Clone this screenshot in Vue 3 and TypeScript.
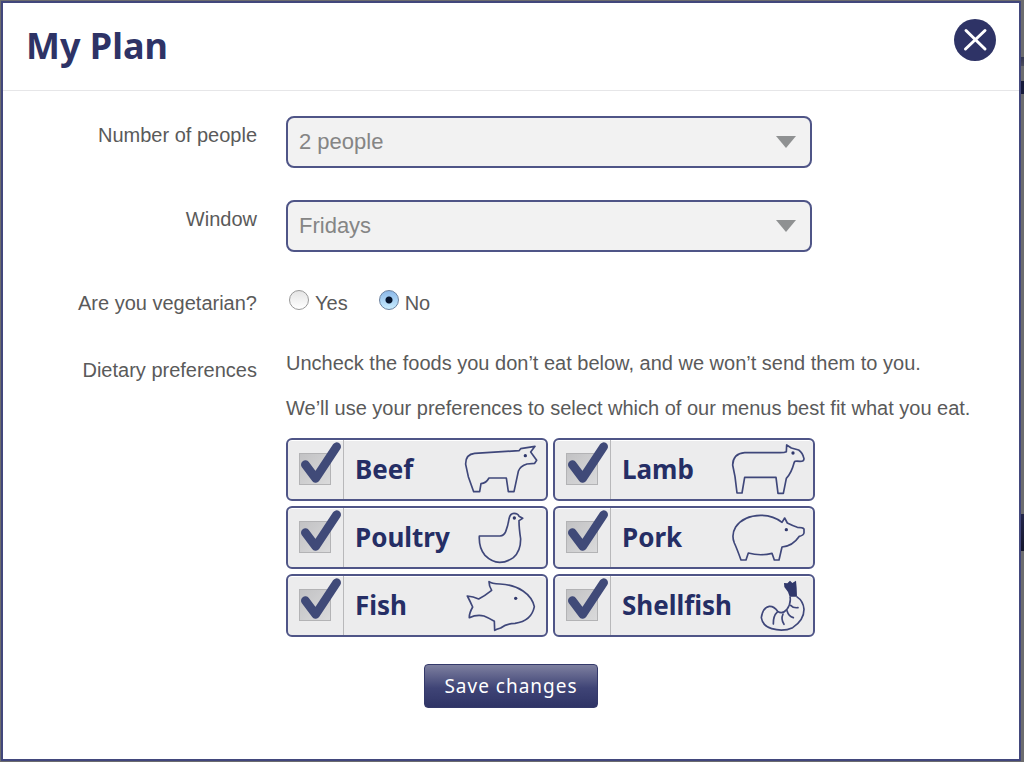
<script setup lang="ts">
import { ref } from 'vue'

interface Food {
  id: string
  name: string
  viewBox: string
  outline: string
  eye?: [number, number]
  detail?: string
  solid?: string
}

const people = ref('2 people')
const deliveryWindow = ref('Fridays')
const vegetarian = ref('no')
const selected = ref<string[]>(['beef', 'lamb', 'poultry', 'pork', 'fish', 'shellfish'])

const foods: Food[] = [
  {
    id: 'beef',
    name: 'Beef',
    viewBox: '540 30 240 177',
    outline:
      'M581 185H599L603 161Q618 160 627 144H679L685 185H702L715 124Q720 108 741 102L764 100L770 91L758 74L752 66L765 49L722 56L717 62L584 70Q556 73 557 103L565 140Z',
    eye: [736, 77],
  },
  {
    id: 'lamb',
    name: 'Lamb',
    viewBox: '531 30 240 177',
    outline:
      'M561 189H576L584 142H678L684 190H700L709 145Q724 130 733 96Q734 92 750 94Q762 94 762 86Q758 68 746 60L724 54L710 45L709 65Q704 68 690 68H584Q549 71 548 105L555 140Z',
    eye: [729, 69],
  },
  {
    id: 'poultry',
    name: 'Poultry',
    viewBox: '540 15 240 177',
    outline:
      'M598 99H660Q672 98 677 86Q684 68 687 48Q690 31 702 31Q714 31 717 40L728 46L717 53Q717 75 722 108Q722 145 700 164Q680 178 659 178Q635 177 615 157Q596 135 598 99Z',
    eye: [703, 45],
  },
  {
    id: 'pork',
    name: 'Pork',
    viewBox: '531 15 240 177',
    outline:
      'M573 171H588L595 150Q630 160 666 151L673 171H687L696 132Q728 130 748 100Q761 97 762 90V78Q758 73 742 73Q728 68 712 60L704 45L696 58Q670 37 632 37Q580 38 557 72Q543 95 553 120Q560 135 573 171Z',
    eye: [709, 80],
  },
  {
    id: 'fish',
    name: 'Fish',
    viewBox: '540 15 240 177',
    outline:
      'M627 32Q634 38 660 39C715 41 755 70 763 107C757 138 735 153 705 157Q680 158 662 171Q648 175 644 178L643 151Q625 140 612 135Q590 130 568 140Q567 128 578 108Q570 90 562 75Q580 77 596 84Q615 74 635 58Q627 45 627 32Z',
    eye: [707, 82],
  },
  {
    id: 'shellfish',
    name: 'Shellfish',
    viewBox: '531 15 240 177',
    outline:
      'M720 77Q724 98 710 116Q697 131 683 121Q672 105 658 106Q638 110 634 140Q638 165 665 173Q700 183 728 170Q762 148 762 115Q760 90 740 77',
    detail: 'M683 122Q669 135 670 159M699 129Q692 145 702 160M711 119Q716 136 730 140M722 103Q730 112 744 110',
    solid: 'M702 36L712 37L720 29L727 36L738 29L740 50L741 77H719Q716 62 703 48Z',
  },
]
</script>

<template>
  <div class="backdrop">
    <section class="modal" role="dialog" aria-labelledby="plan-title">
      <header class="head">
        <h1 id="plan-title">My Plan</h1>
        <button class="close" type="button" aria-label="Close">
          <svg viewBox="0 0 42 42" aria-hidden="true">
            <path d="M12 11.500L31 30M31 11.500L11.500 30" />
          </svg>
        </button>
      </header>

      <form class="form" @submit.prevent>
        <div class="row">
          <label class="caption" for="people">Number of people</label>
          <div class="select">
            <select id="people" v-model="people">
              <option>2 people</option>
            </select>
            <svg viewBox="0 0 20 12" aria-hidden="true"><path d="M0 0H20L10 12Z" /></svg>
          </div>
        </div>

        <div class="row">
          <label class="caption" for="window">Window</label>
          <div class="select">
            <select id="window" v-model="deliveryWindow">
              <option>Fridays</option>
            </select>
            <svg viewBox="0 0 20 12" aria-hidden="true"><path d="M0 0H20L10 12Z" /></svg>
          </div>
        </div>

        <div class="row" role="radiogroup" aria-labelledby="veg-label">
          <span id="veg-label" class="caption">Are you vegetarian?</span>
          <div class="radios">
            <label><input v-model="vegetarian" type="radio" name="vegetarian" value="yes" />Yes</label>
            <label><input v-model="vegetarian" type="radio" name="vegetarian" value="no" />No</label>
          </div>
        </div>

        <div class="row diet" role="group" aria-labelledby="diet-label">
          <span id="diet-label" class="caption">Dietary preferences</span>
          <div class="diet-body">
            <p>Uncheck the foods you don’t eat below, and we won’t send them to you.</p>
            <p>We’ll use your preferences to select which of our menus best fit what you eat.</p>
            <div class="foods">
              <label v-for="food in foods" :key="food.id" class="food">
                <span class="check">
                  <input v-model="selected" type="checkbox" :value="food.id" />
                  <svg class="tick" viewBox="24 30 168 177" aria-hidden="true">
                    <path d="M76 104L107 145L170 50" />
                  </svg>
                </span>
                <span class="name">{{ food.name }}</span>
                <svg class="animal" :viewBox="food.viewBox" aria-hidden="true">
                  <path :d="food.outline" />
                  <path v-if="food.detail" class="detail" :d="food.detail" />
                  <path v-if="food.solid" class="solid" :d="food.solid" />
                  <circle v-if="food.eye" class="solid" :cx="food.eye[0]" :cy="food.eye[1]" r="5" />
                </svg>
              </label>
            </div>
          </div>
        </div>

        <button class="save" type="submit">Save changes</button>
      </form>
    </section>
  </div>
</template>

<style>
body {
  margin: 0;
}
</style>

<style scoped>
* {
  box-sizing: border-box;
}

.backdrop {
  display: flex;
  min-height: 100vh;
  padding: 1px 3px 1px 1px;
  background:
    linear-gradient(#34364e, #4b4c5c) right 57px / 3px 9px no-repeat,
    linear-gradient(#161a3a, #161a3a) right 81px / 3px 13px no-repeat,
    linear-gradient(#24264a, #14152a) right 514px / 3px 37px no-repeat,
    #6c6c6e;
  color: #5a5a5a;
  font: 20px/28px "Liberation Sans", Arial, sans-serif;
}

.modal {
  flex: 1;
  min-width: 0;
  border: 2px solid #42477c;
  background: #fff;
}

.head {
  display: flex;
  align-items: flex-start;
  justify-content: space-between;
  height: 88px;
  padding: 16px 23px 0 23px;
  border-bottom: 1px solid #e6e6e8;
}

h1 {
  margin: 0;
  color: #2e3366;
  font: 700 36px/54px "Noto Sans", sans-serif;
}

.close {
  width: 42px;
  height: 42px;
  padding: 0;
  border: 0;
  border-radius: 50%;
  background: #2e3366;
}

.close svg {
  display: block;
}

.close path {
  fill: none;
  stroke: #fff;
  stroke-width: 3;
  stroke-linecap: round;
}

.form {
  display: flex;
  flex-direction: column;
  padding: 25px 3px 50px;
}

.row {
  display: grid;
  grid-template-columns: 251px minmax(0, 1fr);
  column-gap: 29px;
  margin-bottom: 32px;
}

.caption {
  padding-top: 5px;
  text-align: right;
}

.select {
  position: relative;
  max-width: 526px;
}

.select select {
  display: block;
  width: 100%;
  height: 52px;
  padding: 0 44px 0 11px;
  border: 2px solid #4f5587;
  border-radius: 8px;
  appearance: none;
  background: #f2f2f2;
  color: #858585;
  font: 22px/28px "Liberation Sans", Arial, sans-serif;
}

.select svg {
  position: absolute;
  top: 20px;
  right: 16px;
  width: 20px;
  height: 12px;
  fill: #8f9192;
  pointer-events: none;
}

.radios {
  display: flex;
  gap: 31px;
  padding: 5px 0 0 3px;
}

.radios label {
  display: flex;
  gap: 6px;
}

.radios input {
  width: 20px;
  height: 20px;
  margin: 1px 0 0;
  border: 1px solid #999;
  border-radius: 50%;
  appearance: none;
  background: linear-gradient(#e4e4e4, #fff);
}

.radios input:checked {
  border-color: #6c82a0;
  background:
    radial-gradient(circle, #06142c 3px, transparent 4px),
    linear-gradient(#8bb8e8, #c8ecff);
}

.diet {
  margin-bottom: 27px;
}

.diet .caption {
  padding-top: 7px;
}

.diet-body p {
  margin: 0 0 17px;
}

.diet-body p:last-of-type {
  margin-bottom: 16px;
}

.foods {
  display: grid;
  grid-template-columns: repeat(2, 262px);
  gap: 5px;
}

.food {
  display: flex;
  height: 63px;
  border: 2px solid #4f5587;
  border-radius: 6px;
  background: #ececed;
  box-shadow: inset 0 1px #fff;
}

.check {
  position: relative;
  flex: 0 0 56px;
  padding: 13px 0 0 11px;
  border-right: 1px solid #b8b8ba;
}

.check input {
  display: block;
  width: 32px;
  height: 32px;
  margin: 0;
  border: 1px solid #b3b3b5;
  appearance: none;
  background: linear-gradient(135deg, #c2c2c4, #dadadb);
}

.tick {
  position: absolute;
  top: 0;
  left: 0;
  width: 56px;
  height: 59px;
  fill: none;
  stroke: #404a78;
  stroke-width: 26;
  stroke-linecap: round;
  stroke-linejoin: round;
  pointer-events: none;
}

.check input:not(:checked) + .tick {
  display: none;
}

.name {
  flex: 1;
  padding-left: 11px;
  color: #252e65;
  font: 700 26px/59px "Noto Sans", sans-serif;
}

.animal {
  flex: 0 0 80px;
  height: 59px;
  margin: 0 6px 0 -20px;
  fill: none;
  stroke: #3f477a;
  stroke-width: 5;
  stroke-linejoin: round;
}

.animal .detail {
  stroke-linecap: round;
}

.animal .solid {
  fill: #30386b;
  stroke: none;
}

.save {
  align-self: center;
  height: 44px;
  padding: 0 19px;
  border: 1px solid #34396a;
  border-radius: 4px;
  background: linear-gradient(#7d7f9f, #3f4476 55%, #2f3466);
  color: #fff;
  font: 400 19px/40px "Noto Sans", sans-serif;
  letter-spacing: 1px;
}
</style>
